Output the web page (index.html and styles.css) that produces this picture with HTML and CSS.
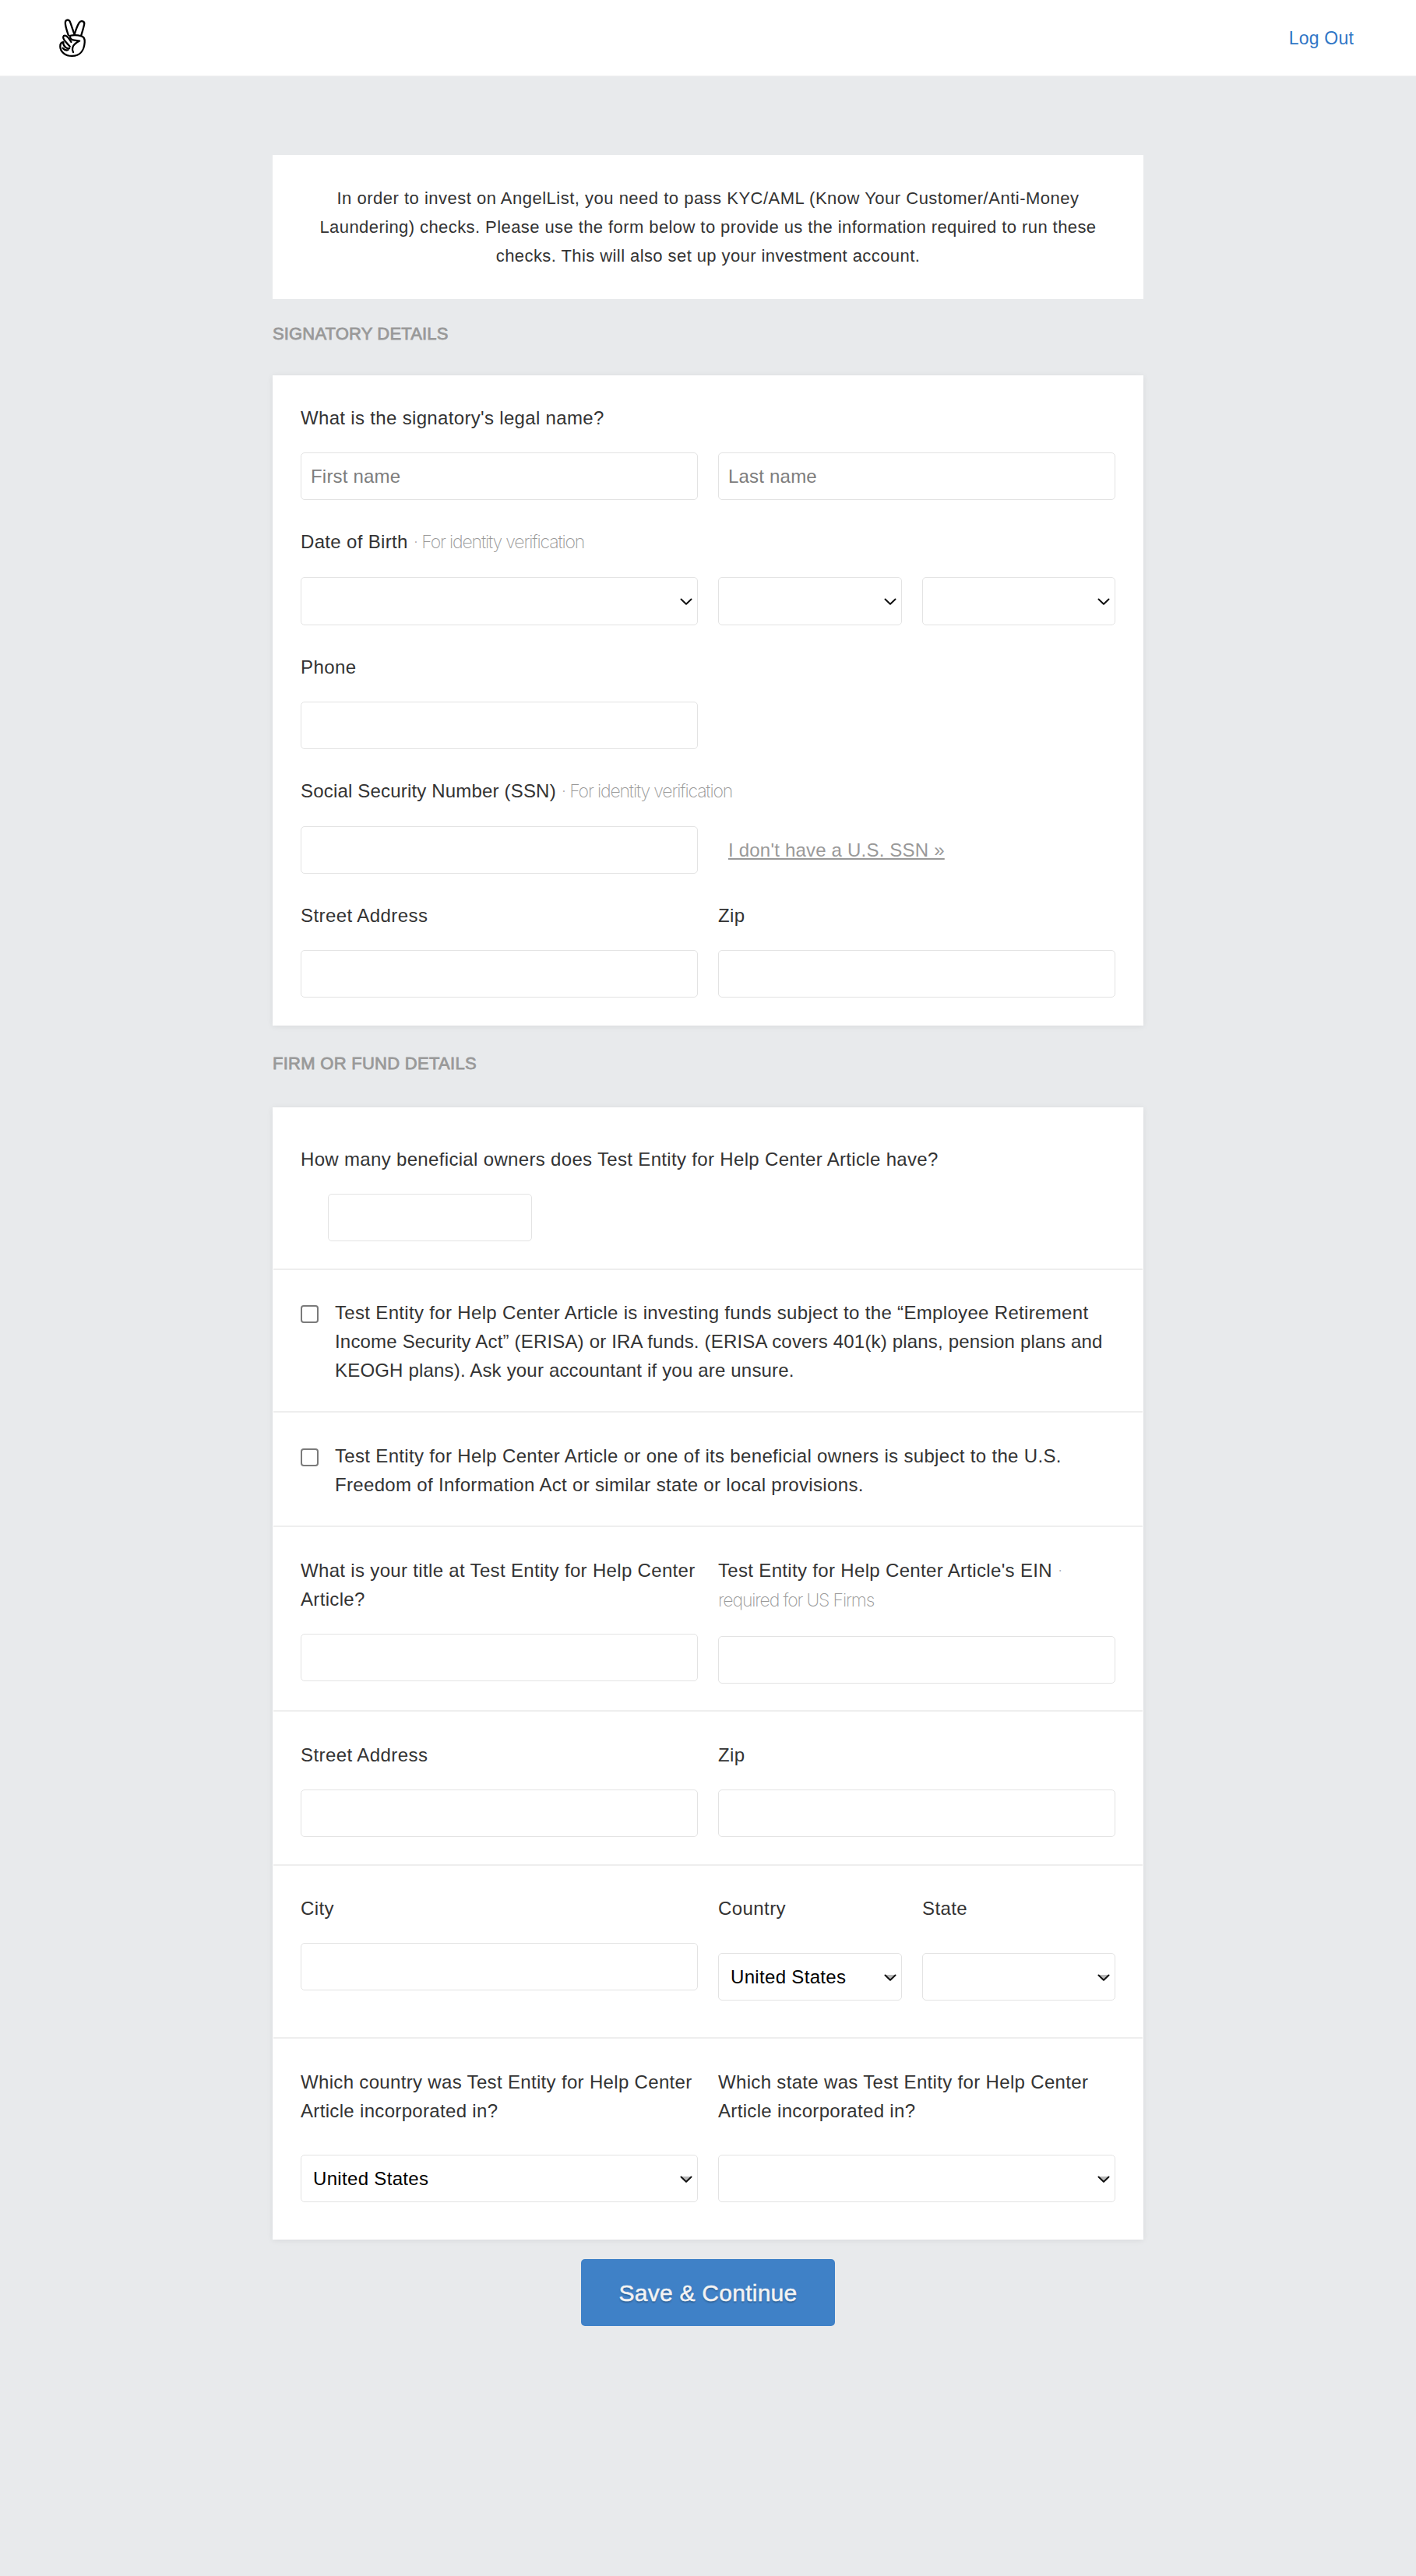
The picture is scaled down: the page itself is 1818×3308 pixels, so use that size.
FILE: index.html
```html
<!DOCTYPE html>
<html lang="en">
<head>
<meta charset="utf-8">
<title>AngelList – Investment account</title>
<link rel="stylesheet" href="styles.css">
</head>
<body>
<svg class="defs" aria-hidden="true">
  <symbol id="chevron" viewBox="0 0 16 10"><path d="M1.5 1.5 8 7.8l6.500-6.300" fill="none" stroke="#111" stroke-width="2" stroke-linecap="round" stroke-linejoin="round"/></symbol>
  <symbol id="chevron-soft" viewBox="0 0 16 10"><path d="M2 1h12L8 7z" fill="#b9b9b9"/><path d="M1.500 1.500 8 7.800l6.500-6.300" fill="none" stroke="#111" stroke-width="2" stroke-linecap="round" stroke-linejoin="round"/></symbol>
</svg>

<header class="topbar">
  <a class="logo" aria-label="AngelList">
    <svg viewBox="76 70 110 156" width="36" height="52" fill="none" stroke="#000" stroke-width="7" stroke-linecap="round" stroke-linejoin="round">
      <path d="M115 136C110 120 103 104 103 88c0-14 15-15 19-3 6 15 10 32 17 48"/>
      <path d="M139 133c5-17 11-33 18-45 7-12 24-7 20 7-3 14-8 30-12 43"/>
      <path d="M120 139c14-4 32-3 46 1 11 3 14 12 13 24-2 32-18 54-50 54-26 0-46-17-46-37 0-10 4-17 12-17"/>
      <path d="M121 181c-8-9-17-19-23-27-6-9-3-16 3-16 10 0 17 12 25 25"/>
      <path d="M95 164c-1 8 3 15 9 20 4 4 9 5 15 4M93 187c5 6 14 10 21 7"/>
      <path d="M122 145c2 6 6 9 12 10l25 4c-12 6-23 12-27 25-2 7-1 14 2 19"/>
    </svg>
  </a>
  <a class="logout">Log Out</a>
</header>

<main class="page">
  <section class="card intro">
    <p><span class="l1">In order to invest on AngelList, you need to pass KYC/AML (Know Your Customer/Anti-Money</span><br>
    <span class="l2">Laundering) checks. Please use the form below to provide us the information required to run these</span><br>
    <span class="l2">checks. This will also set up your investment account.</span></p>
  </section>

  <h2 class="heading heading-signatory">Signatory details</h2>

  <section class="card signatory">
    <div class="field wide">
      <label>What is the signatory's legal name?</label>
      <div class="halves">
        <input class="control" type="text" placeholder="First name">
        <input class="control" type="text" placeholder="Last name">
      </div>
    </div>
    <div class="field wide tall">
      <label>Date of Birth <small>· For identity verification</small></label>
      <div class="thirds">
        <div class="select"><span></span><svg><use href="#chevron"/></svg></div>
        <div class="select"><span></span><svg><use href="#chevron"/></svg></div>
        <div class="select"><span></span><svg><use href="#chevron"/></svg></div>
      </div>
    </div>
    <div class="halves">
      <div class="field"><label class="ls4">Phone</label><input class="control" type="text"></div>
    </div>
    <div class="field wide ssn">
      <label class="ls2">Social Security Number (SSN) <small>· For identity verification</small></label>
      <div class="halves">
        <input class="control" type="text">
        <a class="no-ssn">I don't have a U.S. SSN »</a>
      </div>
    </div>
    <div class="halves">
      <div class="field"><label class="ls4">Street Address</label><input class="control" type="text"></div>
      <div class="field"><label class="ls4">Zip</label><input class="control" type="text"></div>
    </div>
  </section>

  <h2 class="heading heading-firm">Firm or fund details</h2>

  <section class="card firm">
    <div class="row owners">
      <div class="field wide">
        <label>How many beneficial owners does Test Entity for Help Center Article have?</label>
        <input class="control small" type="text">
      </div>
    </div>
    <div class="row check erisa">
      <input class="box" type="checkbox">
      <p>Test Entity for Help Center Article is investing funds subject to the “Employee Retirement<br>
      <span class="ls2">Income Security Act” (ERISA) or IRA funds. (ERISA covers 401(k) plans, pension plans and</span><br>
      <span class="ls2">KEOGH plans). Ask your accountant if you are unsure.</span></p>
    </div>
    <div class="row check foia">
      <input class="box" type="checkbox">
      <p>Test Entity for Help Center Article or one of its beneficial owners is subject to the U.S.<br>
      Freedom of Information Act or similar state or local provisions.</p>
    </div>
    <div class="row halves titles">
      <div class="field"><label>What is your title at Test Entity for Help Center<br>Article?</label><input class="control" type="text"></div>
      <div class="field ein"><label>Test Entity for Help Center Article's EIN <small>·<br>required for US Firms</small></label><input class="control" type="text"></div>
    </div>
    <div class="row halves address">
      <div class="field"><label class="ls4">Street Address</label><input class="control" type="text"></div>
      <div class="field"><label class="ls4">Zip</label><input class="control" type="text"></div>
    </div>
    <div class="row thirds city">
      <div class="field"><label class="ls4">City</label><input class="control" type="text"></div>
      <div class="field low"><label class="ls4">Country</label><div class="select"><span>United States</span><svg><use href="#chevron-soft"/></svg></div></div>
      <div class="field low"><label class="ls4">State</label><div class="select"><span></span><svg><use href="#chevron-soft"/></svg></div></div>
    </div>
    <div class="row halves incorporated">
      <div class="field low"><label>Which country was Test Entity for Help Center<br>Article incorporated in?</label><div class="select"><span>United States</span><svg><use href="#chevron-soft"/></svg></div></div>
      <div class="field low"><label>Which state was Test Entity for Help Center<br>Article incorporated in?</label><div class="select"><span></span><svg><use href="#chevron-soft"/></svg></div></div>
    </div>
  </section>

  <button class="save" type="button">Save &amp; Continue</button>
</main>
</body>
</html>
```
FILE: styles.css
```css
* { box-sizing: border-box; }

body {
  margin: 0;
  min-height: 3308px;
  background: #e8eaec;
  color: #333;
  font: 24px/37px "Liberation Sans", Arial, sans-serif;
  letter-spacing: .33px;
  white-space: nowrap;
}

p, h2 { margin: 0; }
.defs { position: absolute; width: 0; height: 0; }

.topbar {
  display: flex;
  align-items: center;
  justify-content: space-between;
  height: 98px;
  padding: 0 80px 0 75px;
  background: #fff;
  border-bottom: 1px solid #f1f1f1;
}
.logo { display: flex; padding-top: 1px; }
.logout { color: #2f76c6; font-size: 23px; letter-spacing: .2px; padding-top: 2px; }

.page {
  display: flex;
  flex-direction: column;
  width: 1118px;
  margin: 101px auto 0;
}

.card { background: #fff; box-shadow: 0 1px 8px rgba(0,0,0,.07); }

.intro { height: 185px; padding-top: 37px; text-align: center; font-size: 22px; box-shadow: none; }
.l1 { letter-spacing: .5px; }
.l2 { letter-spacing: .42px; }

.heading {
  color: #999;
  font-size: 22px;
  font-weight: 400;
  text-transform: uppercase;
  -webkit-text-stroke: .8px #999;
}
.heading-signatory { margin: 26px 0 35px; letter-spacing: .15px; }
.heading-firm { margin: 30px 0 38px; letter-spacing: .28px; }

.signatory { display: flex; flex-direction: column; gap: 35px; height: 835px; padding: 36px; }

.halves { display: grid; grid-template-columns: 510px 510px; column-gap: 26px; }
.thirds { display: grid; grid-template-columns: 510px 236px 248px; column-gap: 26px; }

.field { display: flex; flex-direction: column; gap: 26px; }
.tall, .ssn { gap: 27px; }
.ein { gap: 27px; }
.low { gap: 39px; }
.incorporated .low { gap: 38px; }

.ls2 { letter-spacing: .18px; }
.ls4 { letter-spacing: .42px; }

small {
  color: #999;
  font: 200 23px/36px Inter, sans-serif;
  letter-spacing: -1.15px;
}
.ein small { line-height: 38px; }

.control, .select {
  width: 100%;
  height: 61px;
  border: 1px solid #e3e3e3;
  border-radius: 5px;
  background: #fff;
}
.control { padding: 0 12px; font: inherit; letter-spacing: .2px; }
.control::placeholder { color: #7d7d7d; }
.small { width: 262px; margin-left: 35px; }

.select {
  display: flex;
  align-items: center;
  justify-content: space-between;
  padding: 0 6px 0 15px;
  color: #000;
}
.tall .select { height: 62px; }
.select svg { width: 16px; height: 10px; margin-top: 2px; }

.no-ssn {
  align-self: center;
  padding: 0 0 0 13px;
  color: #999;
  letter-spacing: .2px;
  text-decoration: underline;
  text-decoration-thickness: 2px;
  text-underline-offset: 2px;
  text-decoration-skip-ink: none;
}

.row { margin: 0 1px; padding: 37px 35px 0; border-bottom: 2px solid #eee; }
.row:last-child { border-bottom: 0; }
.owners { height: 209px; padding-top: 48px; }
.check { display: flex; gap: 21px; }
.erisa { height: 183px; padding-top: 36px; }
.foia { height: 147px; }
.titles { height: 237px; }
.address { height: 198px; }
.city { height: 222px; padding-top: 36px; }
.incorporated { height: 258px; }

.box {
  appearance: none;
  width: 23px;
  height: 23px;
  margin: 9px 0 0;
  border: 2px solid #7a7a7a;
  border-radius: 4px;
  background: #fff;
}

.save {
  align-self: center;
  width: 326px;
  height: 86px;
  margin-top: 25px;
  padding: 2px 0 0;
  border: 0;
  border-radius: 5px;
  background: #3f81c7;
  color: #f3f3f3;
  font: 30px "Liberation Sans", Arial, sans-serif;
  letter-spacing: .25px;
  text-shadow: 0 2px 2px rgba(0,0,0,.25);
  -webkit-text-stroke: .5px #f3f3f3;
}
```
